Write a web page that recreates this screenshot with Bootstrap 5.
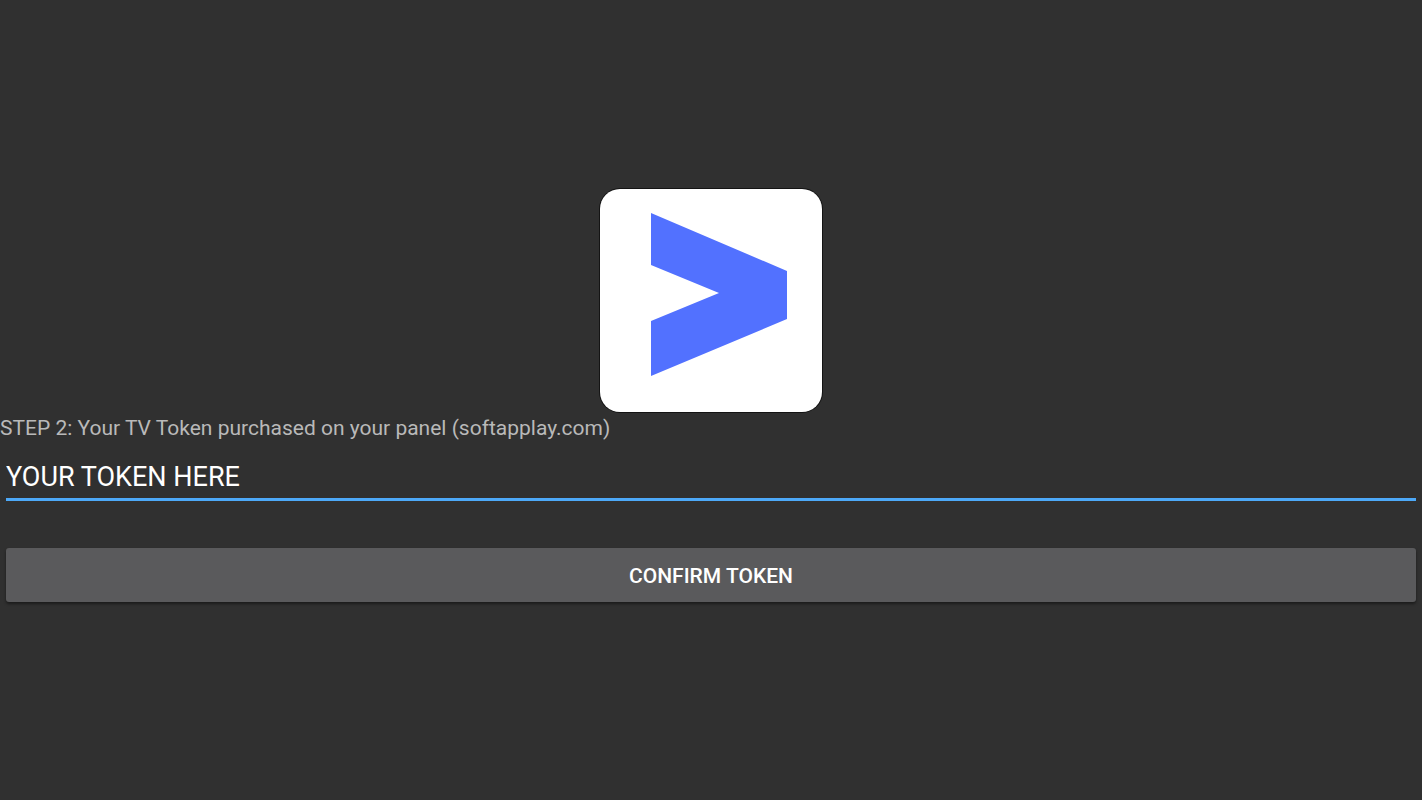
<!DOCTYPE html>
<html lang="en">
<head>
<meta charset="utf-8">
<meta name="viewport" content="width=device-width, initial-scale=1">
<title>Confirm token</title>
<link href="https://cdn.jsdelivr.net/npm/bootstrap@5.3.0/dist/css/bootstrap.min.css" rel="stylesheet">
<style>
  body { background: #303030; color: #fff; font-family: Roboto, "Liberation Sans", sans-serif; }
  .app-logo { width: 222px; height: 224px; overflow: visible; }
  .step-label { color: #b9b9b9; font-size: 21px; line-height: 32px; }
  .token-form { padding-bottom: 10px; }
  .field-row { padding: 8px 6px 0; }
  .action-row { padding: 47px 6px 0; }
  .token-input, .token-input:focus {
    background: transparent; color: #fff; font-size: 27px; line-height: 36px;
    padding: 7px 0 3px; border-bottom: 3px solid #4da9f8; box-shadow: none;
  }
  .confirm-btn, .confirm-btn:hover {
    background: #5a5a5c; color: #fff; font-size: 21px; font-weight: 500; line-height: 30px;
    padding: 13px 12px 11px; border-radius: 3px;
    box-shadow: 0 2px 3px rgba(0, 0, 0, .45);
  }
</style>
</head>
<body>
<main class="min-vh-100 d-flex flex-column justify-content-center">
  <svg class="app-logo d-block mx-auto" viewBox="0 0 222 224" role="img" aria-label="SoftApPlay">
    <rect y="1" width="222" height="223" rx="20" fill="none" stroke="#141414" stroke-width="2"/>
    <rect y="1" width="222" height="223" rx="20" fill="#fff"/>
    <path d="M51 25 187 83V131L51 188V133L119 105 51 77Z" fill="#5271ff"/>
  </svg>
  <form class="token-form">
    <label class="step-label d-block" for="token">STEP 2: Your TV Token purchased on your panel (softapplay.com)</label>
    <div class="field-row">
      <input class="token-input form-control border-top-0 border-start-0 border-end-0 rounded-0" id="token" type="text" value="YOUR TOKEN HERE">
    </div>
    <div class="action-row"><button class="confirm-btn btn border-0 w-100" type="button">CONFIRM TOKEN</button></div>
  </form>
</main>
<script src="https://cdn.jsdelivr.net/npm/bootstrap@5.3.0/dist/js/bootstrap.bundle.min.js"></script>
</body>
</html>
